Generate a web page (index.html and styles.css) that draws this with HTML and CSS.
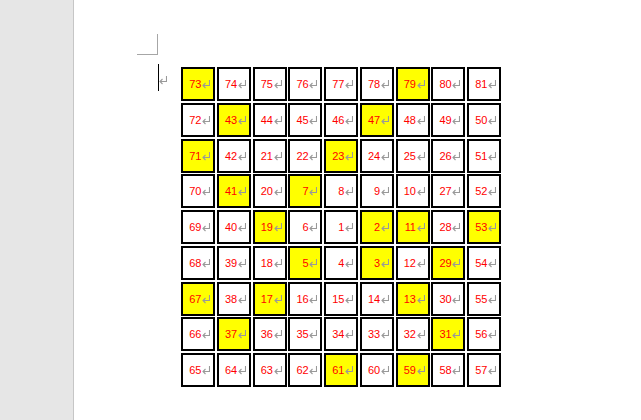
FILE: index.html
```html
<!DOCTYPE html>
<html>
<head>
<meta charset="utf-8">
<link rel="stylesheet" href="styles.css">
</head>
<body>
<div class="app">
  <aside class="side"></aside>
  <main class="page">
    <div class="corner"></div>
    <div class="row">
      <div class="lead">
        <div class="cursor"></div>
        <svg class="mark lead-mark" viewBox="0 0 8 9" width="8" height="9"><path d="M7.5 0V5.5H1M3.5 3L1 5.5L3.5 8" fill="none" stroke="#999999" stroke-width="1.1"/></svg>
      </div>
      <div class="grid">
        <div class="c p"><span>73</span></div><div class="c"><span>74</span></div><div class="c"><span>75</span></div><div class="c"><span>76</span></div><div class="c"><span>77</span></div><div class="c"><span>78</span></div><div class="c p"><span>79</span></div><div class="c"><span>80</span></div><div class="c"><span>81</span></div>
        <div class="c"><span>72</span></div><div class="c p"><span>43</span></div><div class="c"><span>44</span></div><div class="c"><span>45</span></div><div class="c"><span>46</span></div><div class="c p"><span>47</span></div><div class="c"><span>48</span></div><div class="c"><span>49</span></div><div class="c"><span>50</span></div>
        <div class="c p"><span>71</span></div><div class="c"><span>42</span></div><div class="c"><span>21</span></div><div class="c"><span>22</span></div><div class="c p"><span>23</span></div><div class="c"><span>24</span></div><div class="c"><span>25</span></div><div class="c"><span>26</span></div><div class="c"><span>51</span></div>
        <div class="c"><span>70</span></div><div class="c p"><span>41</span></div><div class="c"><span>20</span></div><div class="c p"><span>7</span></div><div class="c"><span>8</span></div><div class="c"><span>9</span></div><div class="c"><span>10</span></div><div class="c"><span>27</span></div><div class="c"><span>52</span></div>
        <div class="c"><span>69</span></div><div class="c"><span>40</span></div><div class="c p"><span>19</span></div><div class="c"><span>6</span></div><div class="c"><span>1</span></div><div class="c p"><span>2</span></div><div class="c p"><span>11</span></div><div class="c"><span>28</span></div><div class="c p"><span>53</span></div>
        <div class="c"><span>68</span></div><div class="c"><span>39</span></div><div class="c"><span>18</span></div><div class="c p"><span>5</span></div><div class="c"><span>4</span></div><div class="c p"><span>3</span></div><div class="c"><span>12</span></div><div class="c p"><span>29</span></div><div class="c"><span>54</span></div>
        <div class="c p"><span>67</span></div><div class="c"><span>38</span></div><div class="c p"><span>17</span></div><div class="c"><span>16</span></div><div class="c"><span>15</span></div><div class="c"><span>14</span></div><div class="c p"><span>13</span></div><div class="c"><span>30</span></div><div class="c"><span>55</span></div>
        <div class="c"><span>66</span></div><div class="c p"><span>37</span></div><div class="c"><span>36</span></div><div class="c"><span>35</span></div><div class="c"><span>34</span></div><div class="c"><span>33</span></div><div class="c"><span>32</span></div><div class="c p"><span>31</span></div><div class="c"><span>56</span></div>
        <div class="c"><span>65</span></div><div class="c"><span>64</span></div><div class="c"><span>63</span></div><div class="c"><span>62</span></div><div class="c p"><span>61</span></div><div class="c"><span>60</span></div><div class="c p"><span>59</span></div><div class="c"><span>58</span></div><div class="c"><span>57</span></div>
      </div>
    </div>
  </main>
</div>
</body>
</html>
```
FILE: styles.css
```css
html, body {
  margin: 0;
  padding: 0;
  background: #ffffff;
}
.app {
  display: flex;
  width: 641px;
  height: 420px;
  overflow: hidden;
}
.side {
  width: 73px;
  flex: none;
  background: #e6e6e6;
  border-right: 1px solid #c6c6c6;
}
.page {
  flex: 1;
  padding-left: 63px;
}
.corner {
  margin-top: 34px;
  width: 20px;
  height: 20px;
  border-right: 1px solid #a6a6a6;
  border-bottom: 1px solid #a6a6a6;
}
.row {
  display: flex;
  align-items: flex-start;
  margin-top: 9px;
  margin-left: 21px;
}
.lead {
  display: flex;
  align-items: flex-start;
  width: 23px;
  flex: none;
}
.cursor {
  width: 1px;
  height: 27px;
  background: #000;
}
.lead-mark {
  display: block;
  margin-top: 12px;
  margin-left: 0;
}
.grid {
  margin-top: 3px;
  display: grid;
  grid-template-columns: repeat(9, 34px);
  grid-auto-rows: 34px;
  gap: 1.75px;
}
.c {
  box-sizing: border-box;
  border: 2px solid #000;
  background: #fff;
  display: flex;
  align-items: center;
  justify-content: flex-end;
  padding-right: 3px;
  font-family: "Liberation Sans", Arial, sans-serif;
  font-size: 11px;
  color: #ff0000;
}
.c.p {
  background: #ffff00;
}
.c span {
  letter-spacing: -0.3px;
}
.c span::after {
  content: "";
  display: inline-block;
  width: 8px;
  height: 9px;
  margin-left: 1px;
  vertical-align: -1px;
  background: url("data:image/svg+xml;utf8,<svg xmlns='http://www.w3.org/2000/svg' viewBox='0 0 8 9'><path d='M7.5 0V5.5H1M3.5 3L1 5.5L3.5 8' fill='none' stroke='%23999999' stroke-width='1.1'/></svg>") no-repeat;
}
```
